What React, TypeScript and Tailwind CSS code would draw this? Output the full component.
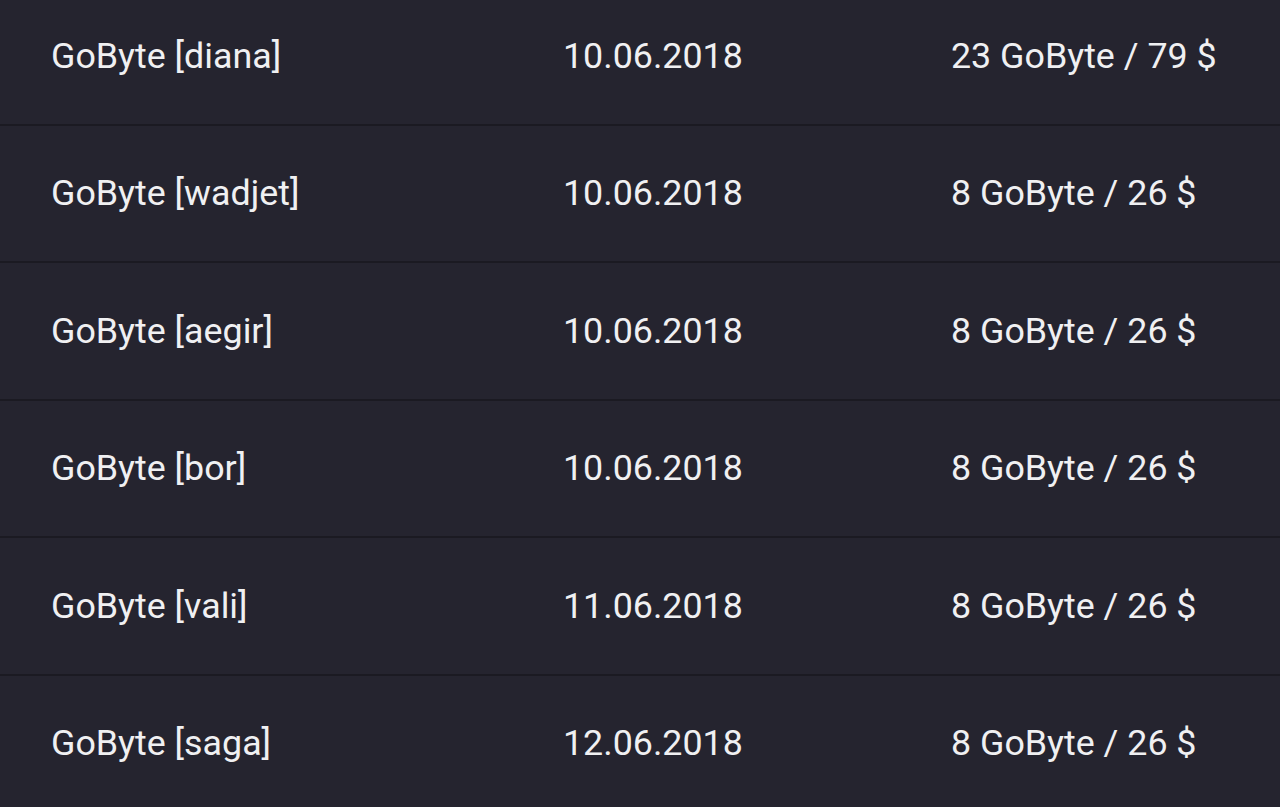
import React from "react";

const rows = [
  ["GoByte [diana]", "10.06.2018", "23 GoByte / 79 $"],
  ["GoByte [wadjet]", "10.06.2018", "8 GoByte / 26 $"],
  ["GoByte [aegir]", "10.06.2018", "8 GoByte / 26 $"],
  ["GoByte [bor]", "10.06.2018", "8 GoByte / 26 $"],
  ["GoByte [vali]", "11.06.2018", "8 GoByte / 26 $"],
  ["GoByte [saga]", "12.06.2018", "8 GoByte / 26 $"],
];

export default function App() {
  return (
    <div
      className="w-[1280px] h-[807px] overflow-hidden bg-[#25242f] text-[#f0f0f2]"
      style={{ fontFamily: "Roboto, 'Noto Sans', sans-serif" }}
    >
      <div className="-mt-[12px]">
        {rows.map((r, i) => (
          <div
            key={i}
            className="flex items-center h-[137.5px] pt-[2px] border-b-2 border-[#1b1a22] text-[35.8px] leading-none"
          >
            <div className="w-[563px] pl-[51px]">{r[0]}</div>
            <div className="w-[388px]">{r[1]}</div>
            <div>{r[2]}</div>
          </div>
        ))}
      </div>
    </div>
  );
}
